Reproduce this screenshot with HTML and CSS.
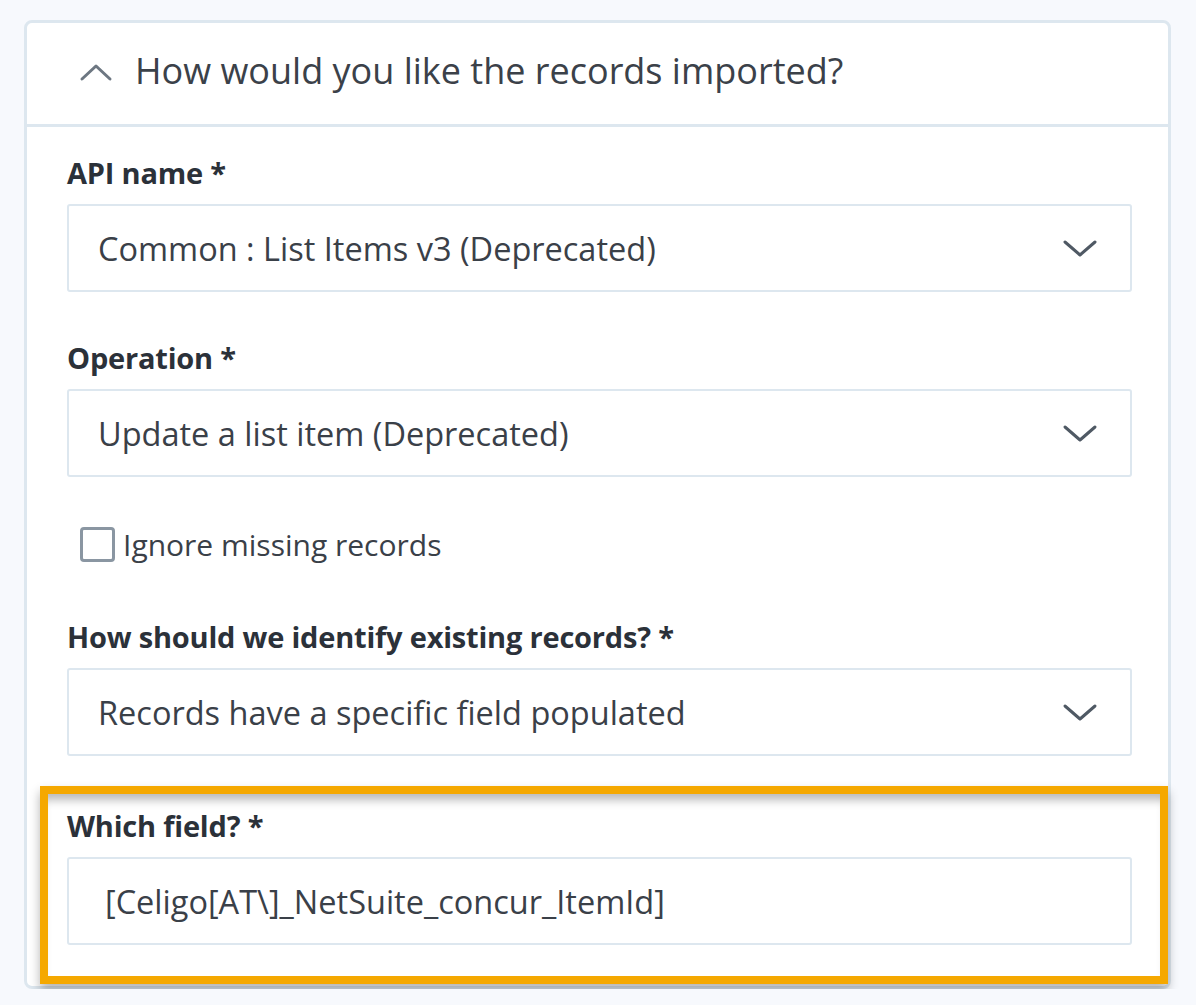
FILE: index.html
```html
<!DOCTYPE html>
<html lang="en">
<head>
  <meta charset="UTF-8">
  <title>Import settings</title>
  <link rel="stylesheet" href="styles.css">
</head>
<body>
  <div class="panel">
    <div class="panel-header">
      <svg class="chev-up" width="34" height="20" viewBox="0 0 34 20"><path d="M3 17 L17 4 L31 17" fill="none" stroke="#6d7782" stroke-width="3" stroke-linecap="round" stroke-linejoin="round"/></svg>
      <span class="panel-title">How would you like the records imported?</span>
    </div>

    <div class="panel-body">
      <div class="field">
        <label>API name *</label>
        <div class="select">
          <span>Common : List Items v3 (Deprecated)</span>
          <svg width="36" height="20" viewBox="0 0 36 20"><path d="M3 4 L18 17 L33 4" fill="none" stroke="#4f5964" stroke-width="3" stroke-linecap="round" stroke-linejoin="round"/></svg>
        </div>
      </div>

      <div class="field">
        <label>Operation *</label>
        <div class="select">
          <span>Update a list item (Deprecated)</span>
          <svg width="36" height="20" viewBox="0 0 36 20"><path d="M3 4 L18 17 L33 4" fill="none" stroke="#4f5964" stroke-width="3" stroke-linecap="round" stroke-linejoin="round"/></svg>
        </div>
      </div>

      <div class="check-row">
        <span class="checkbox"></span>
        <span>Ignore missing records</span>
      </div>

      <div class="field last-select">
        <label>How should we identify existing records? *</label>
        <div class="select">
          <span>Records have a specific field populated</span>
          <svg width="36" height="20" viewBox="0 0 36 20"><path d="M3 4 L18 17 L33 4" fill="none" stroke="#4f5964" stroke-width="3" stroke-linecap="round" stroke-linejoin="round"/></svg>
        </div>
      </div>

      <div class="field highlight">
        <label>Which field? *</label>
        <div class="text-input">[Celigo[AT\]_NetSuite_concur_ItemId]</div>
      </div>
    </div>
  </div>
</body>
</html>
```

FILE: styles.css
```css
body {
  margin: 0;
  padding: 20px 25px 0 24px;
  background-color: #f7f9fd;
  font-family: "Open Sans", "Lato", sans-serif;
  color: #333a42;
}
.panel {
  background: #fff;
  border: 3px solid #dde7ef;
  border-radius: 8px;
}
.panel-header {
  height: 101px;
  display: flex;
  align-items: center;
  gap: 22px;
  padding-left: 52px;
  border-bottom: 3px solid #dde7ef;
}
.chev-up {
  margin-top: -4px;
}
.panel-title {
  font-size: 36px;
  color: #3b4149;
  margin-top: -6px;
}
.panel-body {
  padding: 30px 36px 2px 40px;
}
.field {
  margin-bottom: 50px;
}
.field label {
  display: block;
  font-weight: bold;
  font-size: 29px;
  line-height: 32px;
  margin-bottom: 15px;
  color: #2b3139;
  letter-spacing: -0.2px;
}
.select, .text-input {
  height: 84px;
  border: 2px solid #dde7ef;
  border-radius: 3px;
  display: flex;
  align-items: center;
  justify-content: space-between;
  padding: 0 32px 0 29px;
  font-size: 32.5px;
  color: #3a4048;
}
.check-row {
  display: flex;
  align-items: center;
  gap: 8px;
  height: 35px;
  margin: 2px 0 59px 13px;
  font-size: 30px;
  color: #3a4048;
}
.checkbox {
  width: 29px;
  height: 29px;
  border: 3px solid #8a96a2;
  border-radius: 4px;
}
.last-select {
  margin-bottom: 30px;
}
.highlight {
  margin: 0 -36px 0 -27px;
  border: 8px solid #f5a800;
  padding: 16px 28px 31px 19px;
  box-shadow: inset 0 12px 10px -6px rgba(0, 0, 0, 0.28), 0 6px 10px rgba(0, 0, 0, 0.3);
}
.text-input {
  padding-left: 36px;
}
```
